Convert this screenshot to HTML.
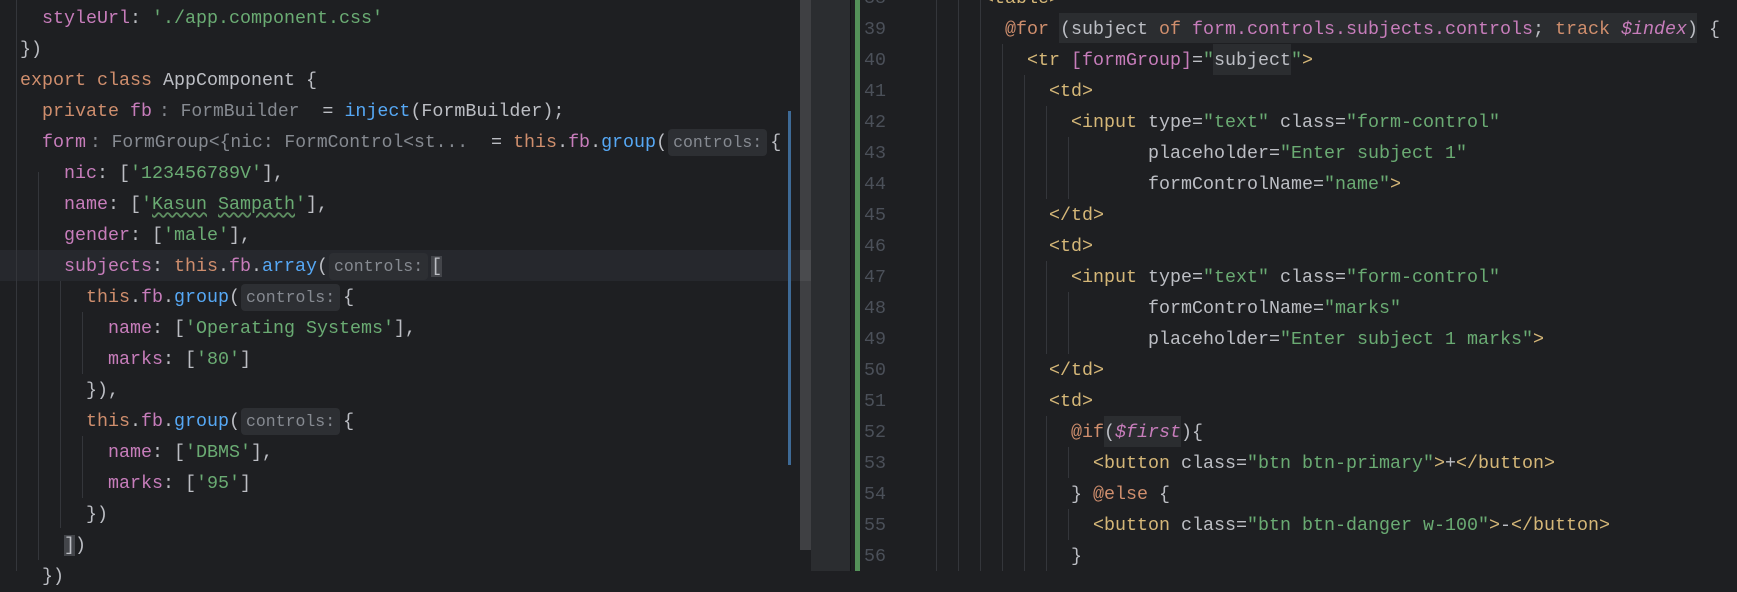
<!DOCTYPE html>
<html><head><meta charset="utf-8"><style>
*{margin:0;padding:0;box-sizing:border-box}
body{width:1737px;height:571px;overflow:hidden;background:#1e1f22;position:relative;font-family:"Liberation Mono","DejaVu Sans Mono",monospace;font-size:18.333px;color:#bcbec4}
.l{position:absolute;height:31px;line-height:31px;white-space:pre}
.k{color:#cf8e6d}.s{color:#6aab73}.p{color:#c77dbb}.f{color:#56a8f5}.t{color:#d5b778}.g{color:#868a91;font-size:18px}
.i{font-style:italic}
.h{display:inline-block;height:27px;line-height:27px;vertical-align:top;margin-top:2px;padding:0 5px;margin-left:1px;margin-right:3px;background:#2d2f33;border-radius:4px;color:#868a91;font-size:16.5px}
.vg{position:absolute;width:1px;background:#34363b}
.n{position:absolute;left:860px;width:26px;text-align:right;height:31px;line-height:31px;color:#4b5059}
</style></head><body>
<!-- current line highlight -->
<div style="position:absolute;left:0;top:250px;width:800px;height:31px;background:#26282d"></div>
<!-- left guides -->
<div class="vg" style="left:16px;top:0;height:571px"></div>
<div class="vg" style="left:38px;top:172px;height:388px"></div>
<div class="vg" style="left:60px;top:281px;height:247px"></div>
<div class="vg" style="left:82px;top:312px;height:62px"></div>
<div class="vg" style="left:82px;top:436px;height:62px"></div>
<!-- left code -->
<div class="l" style="left:20px;top:2.5px">  <span class="p">styleUrl</span>: <span class="s">'./app.component.css'</span></div>
<div class="l" style="left:20px;top:33.5px">})</div>
<div class="l" style="left:20px;top:64.5px"><span class="k">export class </span>AppComponent {</div>
<div class="l" style="left:20px;top:95.5px">  <span class="k">private </span><span class="p">fb</span><span class="g" style="margin-left:7px;margin-right:1px">: FormBuilder</span>  = <span class="f">inject</span>(FormBuilder);</div>
<div class="l" style="left:20px;top:126.5px">  <span class="p">form</span><span class="g" style="margin-left:4px;margin-right:1px">: FormGroup&lt;{nic: FormControl&lt;st...</span>  = <span class="k">this</span>.<span class="p">fb</span>.<span class="f">group</span>(<span class="h">controls:</span>{</div>
<div class="l" style="left:20px;top:157.5px">    <span class="p">nic</span>: [<span class="s">'123456789V'</span>],</div>
<div class="l" style="left:20px;top:188.5px">    <span class="p">name</span>: [<span class="s">'<span style="text-decoration:underline wavy #5f8f62;text-underline-offset:3px">Kasun</span> <span style="text-decoration:underline wavy #5f8f62;text-underline-offset:3px">Sampath</span>'</span>],</div>
<div class="l" style="left:20px;top:219.5px">    <span class="p">gender</span>: [<span class="s">'male'</span>],</div>
<div class="l" style="left:20px;top:250.5px">    <span class="p">subjects</span>: <span class="k">this</span>.<span class="p">fb</span>.<span class="f">array</span>(<span class="h">controls:</span><span style="background:#43454a">[</span></div>
<div class="l" style="left:20px;top:281.5px">      <span class="k">this</span>.<span class="p">fb</span>.<span class="f">group</span>(<span class="h">controls:</span>{</div>
<div class="l" style="left:20px;top:312.5px">        <span class="p">name</span>: [<span class="s">'Operating Systems'</span>],</div>
<div class="l" style="left:20px;top:343.5px">        <span class="p">marks</span>: [<span class="s">'80'</span>]</div>
<div class="l" style="left:20px;top:374.5px">      }),</div>
<div class="l" style="left:20px;top:405.5px">      <span class="k">this</span>.<span class="p">fb</span>.<span class="f">group</span>(<span class="h">controls:</span>{</div>
<div class="l" style="left:20px;top:436.5px">        <span class="p">name</span>: [<span class="s">'DBMS'</span>],</div>
<div class="l" style="left:20px;top:467.5px">        <span class="p">marks</span>: [<span class="s">'95'</span>]</div>
<div class="l" style="left:20px;top:498.5px">      })</div>
<div class="l" style="left:20px;top:529.5px">    <span style="background:#43454a">]</span>)</div>
<div class="l" style="left:20px;top:560.5px">  })</div>
<!-- blue marker / scrollbar -->
<div style="position:absolute;left:788px;top:111px;width:3px;height:354px;background:#3e6a96"></div>
<div style="position:absolute;left:800px;top:0;width:11px;height:550px;background:#3f4043"></div>
<div style="position:absolute;left:800px;top:250px;width:11px;height:31px;background:#4a4b4e"></div>
<div style="position:absolute;left:811px;top:0;width:39px;height:571px;background:#2b2d30"></div>
<div style="position:absolute;left:850px;top:0;width:1px;height:571px;background:#141517"></div>
<div style="position:absolute;left:855px;top:0;width:5px;height:571px;background:#549159"></div>
<!-- line numbers -->
<div class="n" style="top:-17.5px">38</div>
<div class="n" style="top:13.5px">39</div>
<div class="n" style="top:44.5px">40</div>
<div class="n" style="top:75.5px">41</div>
<div class="n" style="top:106.5px">42</div>
<div class="n" style="top:137.5px">43</div>
<div class="n" style="top:168.5px">44</div>
<div class="n" style="top:199.5px">45</div>
<div class="n" style="top:230.5px">46</div>
<div class="n" style="top:261.5px">47</div>
<div class="n" style="top:292.5px">48</div>
<div class="n" style="top:323.5px">49</div>
<div class="n" style="top:354.5px">50</div>
<div class="n" style="top:385.5px">51</div>
<div class="n" style="top:416.5px">52</div>
<div class="n" style="top:447.5px">53</div>
<div class="n" style="top:478.5px">54</div>
<div class="n" style="top:509.5px">55</div>
<div class="n" style="top:540.5px">56</div>
<!-- right highlights -->
<div style="position:absolute;left:1059px;top:13px;width:638px;height:30px;background:#2b2d30"></div>
<div style="position:absolute;left:1213px;top:44px;width:78px;height:31px;background:#2b2d30"></div>
<div style="position:absolute;left:1104px;top:416px;width:77px;height:31px;background:#2b2d30"></div>
<!-- right guides -->
<div class="vg" style="left:936px;top:0;height:571px"></div>
<div class="vg" style="left:958px;top:0;height:571px"></div>
<div class="vg" style="left:980px;top:0;height:571px"></div>
<div class="vg" style="left:1002px;top:44px;height:527px"></div>
<div class="vg" style="left:1024px;top:75px;height:496px"></div>
<div class="vg" style="left:1046px;top:106px;height:93px"></div>
<div class="vg" style="left:1046px;top:261px;height:93px"></div>
<div class="vg" style="left:1046px;top:416px;height:155px"></div>
<div class="vg" style="left:1068px;top:137px;height:62px"></div>
<div class="vg" style="left:1068px;top:292px;height:62px"></div>
<div class="vg" style="left:1068px;top:447px;height:31px"></div>
<div class="vg" style="left:1068px;top:509px;height:31px"></div>
<!-- right code -->
<div class="l" style="left:917px;top:-17.5px">      <span class="t">&lt;table&gt;</span></div>
<div class="l" style="left:917px;top:13.5px">        <span class="k">@for</span> (subject <span class="k">of</span> <span class="p">form.controls.subjects.controls</span>; <span class="k">track</span> <span class="p i">$index</span>) {</div>
<div class="l" style="left:917px;top:44.5px">          <span class="t">&lt;tr</span> <span class="p">[formGroup]</span>=<span class="s">"</span>subject<span class="s">"</span><span class="t">&gt;</span></div>
<div class="l" style="left:917px;top:75.5px">            <span class="t">&lt;td&gt;</span></div>
<div class="l" style="left:917px;top:106.5px">              <span class="t">&lt;input</span> type=<span class="s">"text"</span> class=<span class="s">"form-control"</span></div>
<div class="l" style="left:917px;top:137.5px">                     placeholder=<span class="s">"Enter subject 1"</span></div>
<div class="l" style="left:917px;top:168.5px">                     formControlName=<span class="s">"name"</span><span class="t">&gt;</span></div>
<div class="l" style="left:917px;top:199.5px">            <span class="t">&lt;/td&gt;</span></div>
<div class="l" style="left:917px;top:230.5px">            <span class="t">&lt;td&gt;</span></div>
<div class="l" style="left:917px;top:261.5px">              <span class="t">&lt;input</span> type=<span class="s">"text"</span> class=<span class="s">"form-control"</span></div>
<div class="l" style="left:917px;top:292.5px">                     formControlName=<span class="s">"marks"</span></div>
<div class="l" style="left:917px;top:323.5px">                     placeholder=<span class="s">"Enter subject 1 marks"</span><span class="t">&gt;</span></div>
<div class="l" style="left:917px;top:354.5px">            <span class="t">&lt;/td&gt;</span></div>
<div class="l" style="left:917px;top:385.5px">            <span class="t">&lt;td&gt;</span></div>
<div class="l" style="left:917px;top:416.5px">              <span class="k">@if</span>(<span class="p i">$first</span>){</div>
<div class="l" style="left:917px;top:447.5px">                <span class="t">&lt;button</span> class=<span class="s">"btn btn-primary"</span><span class="t">&gt;</span>+<span class="t">&lt;/button&gt;</span></div>
<div class="l" style="left:917px;top:478.5px">              } <span class="k">@else</span> {</div>
<div class="l" style="left:917px;top:509.5px">                <span class="t">&lt;button</span> class=<span class="s">"btn btn-danger w-100"</span><span class="t">&gt;</span>-<span class="t">&lt;/button&gt;</span></div>
<div class="l" style="left:917px;top:540.5px">              }</div>
</body></html>
